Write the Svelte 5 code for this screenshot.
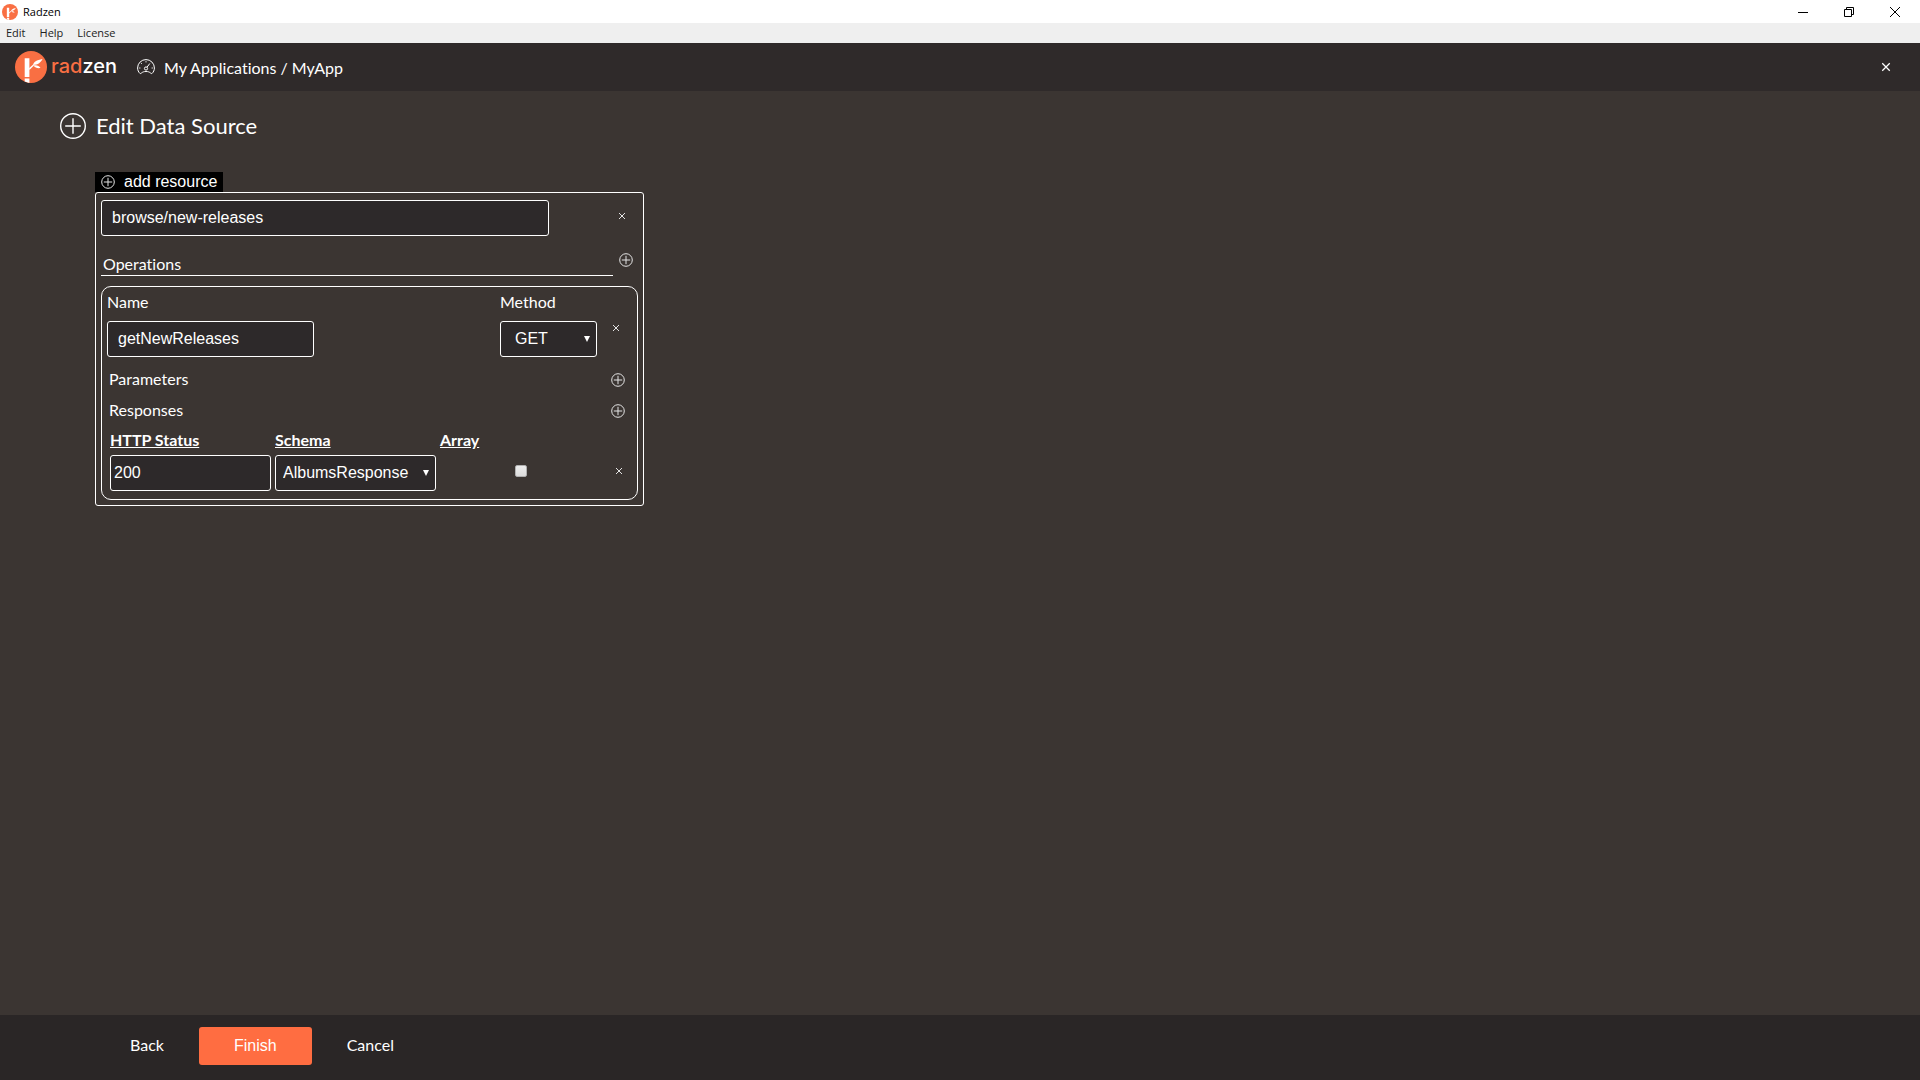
<script>
  const menu = ['Edit', 'Help', 'License'];
  const methods = ['GET', 'POST', 'PUT', 'PATCH', 'DELETE'];
  const schemas = ['AlbumsResponse'];

  let path = $state('browse/new-releases');
  let operation = $state({ name: 'getNewReleases', method: 'GET' });
  let responses = $state([{ status: '200', schema: 'AlbumsResponse', array: false }]);

  function addResponse() {
    responses.push({ status: '', schema: schemas[0], array: false });
  }

  function removeResponse(index) {
    responses.splice(index, 1);
  }
</script>

{#snippet mark(size)}
  <svg width={size} height={size} viewBox="0 0 32 32" aria-hidden="true">
    <circle cx="16" cy="16" r="16" fill="#f96f43" />
    <path d="M9.700 7.300H14.400V26H9.700zM9.700 27.500H14.400V32L9.700 30.500z" fill="#fff" />
    <path d="M14 17.200L18.200 13.600L19 14.400L14.400 19z" fill="#fff" />
    <path d="M18 14C18.500 11 21.500 9 27.500 8C26 11.500 23 13.700 18 14z" fill="#fff" />
    <path d="M18.500 14.600C21.500 13.800 24 14.800 25.500 17C22.500 17.500 20.200 16.800 18.500 14.600z" fill="#fff" />
  </svg>
{/snippet}

{#snippet plus(size, stroke)}
  <svg width={size} height={size} viewBox="0 0 {size} {size}" fill="none" stroke="currentColor" stroke-width={stroke} aria-hidden="true">
    <circle cx={size / 2} cy={size / 2} r={size / 2 - 0.7} />
    <path d="M{size / 2} {size * 0.2}V{size * 0.8}M{size * 0.2} {size / 2}H{size * 0.8}" />
  </svg>
{/snippet}

{#snippet cross(size)}
  <svg width={size} height={size} viewBox="0 0 8 8" fill="none" stroke="currentColor" stroke-width="1" aria-hidden="true">
    <path d="M1 1L7 7M7 1L1 7" />
  </svg>
{/snippet}

{#snippet arrow()}
  <svg class="arrow" width="6" height="6" viewBox="0 0 6 6" aria-hidden="true">
    <path d="M0 0H6L3 6z" fill="currentColor" />
  </svg>
{/snippet}

<div class="app">
  <div class="titlebar">
    {@render mark(16)}
    <span class="title">Radzen</span>
    <div class="controls">
      <button aria-label="Minimize">
        <svg width="10" height="10" viewBox="0 0 10 10"><path d="M0 5.500H10" stroke="#000" /></svg>
      </button>
      <button aria-label="Restore">
        <svg width="10" height="10" viewBox="0 0 10 10" fill="none" stroke="#000">
          <path d="M.5 2.500H7.500V9.500H.5zM2.500 2.500V.5H9.500V7.500H7.500" />
        </svg>
      </button>
      <button aria-label="Close window">
        <svg width="10" height="10" viewBox="0 0 10 10"><path d="M0 0L10 10M10 0L0 10" stroke="#000" /></svg>
      </button>
    </div>
  </div>

  <nav class="menu">
    {#each menu as item}
      <button>{item}</button>
    {/each}
  </nav>

  <header>
    <a href="#home" class="logo">
      {@render mark(32)}
      <span class="brand"><span class="rad">rad</span>zen</span>
    </a>
    <a href="#apps" class="crumbs">
      <svg width="18" height="16" viewBox="0 0 18 16" fill="none" stroke="currentColor" aria-hidden="true">
        <path d="M3 14.500C1.500 13 .6 11.200 .6 9A8.400 8.400 0 0 1 17.400 9C17.400 11.200 16.500 13 15 14.500C13.500 15 13.500 12.500 9 12.500S4.500 15 3 14.500z" />
        <circle cx="9" cy="9.500" r="1.600" />
        <path d="M10 8.200L12.800 4.500" />
        <path d="M9 2V3.500M4 4L5 5M2 9H3.500M14.500 9H16" stroke-width="0.800" />
      </svg>
      <span>My Applications / MyApp</span>
    </a>
    <button class="close" aria-label="Close">{@render cross(10)}</button>
  </header>

  <main>
    <h1>{@render plus(26, 1.4)}Edit Data Source</h1>

    <div class="resources">
      <button class="add">{@render plus(14, 1)}add resource</button>

      <section class="resource">
        <div class="path">
          <input type="text" aria-label="Resource path" bind:value={path} />
          <button aria-label="Remove resource">{@render cross(8)}</button>
        </div>

        <div class="operations">
          <h2>Operations</h2>
          <button aria-label="Add operation">{@render plus(14, 1)}</button>
        </div>

        <div class="operation">
          <div class="signature">
            <label for="name">Name</label>
            <label for="method">Method</label>
            <span></span>
            <input id="name" class="name" type="text" bind:value={operation.name} />
            <div class="select method">
              <select id="method" bind:value={operation.method}>
                {#each methods as method}
                  <option>{method}</option>
                {/each}
              </select>
              {@render arrow()}
            </div>
            <button aria-label="Remove operation">{@render cross(8)}</button>
          </div>

          <div class="row">
            <h3>Parameters</h3>
            <button aria-label="Add parameter">{@render plus(14, 1)}</button>
          </div>
          <div class="row">
            <h3>Responses</h3>
            <button aria-label="Add response" onclick={addResponse}>{@render plus(14, 1)}</button>
          </div>

          <table>
            <thead>
              <tr>
                <th>HTTP Status</th>
                <th>Schema</th>
                <th>Array</th>
                <th class="last"></th>
              </tr>
            </thead>
            <tbody>
              {#each responses as response, i}
                <tr>
                  <td><input class="status" type="text" aria-label="HTTP Status" bind:value={response.status} /></td>
                  <td>
                    <div class="select">
                      <select aria-label="Schema" bind:value={response.schema}>
                        {#each schemas as schema}
                          <option>{schema}</option>
                        {/each}
                      </select>
                      {@render arrow()}
                    </div>
                  </td>
                  <td class="check"><input type="checkbox" aria-label="Array" bind:checked={response.array} /></td>
                  <td class="remove">
                    <button aria-label="Remove response" onclick={() => removeResponse(i)}>{@render cross(8)}</button>
                  </td>
                </tr>
              {/each}
            </tbody>
          </table>
        </div>
      </section>
    </div>
  </main>

  <footer>
    <button>Back</button>
    <button class="primary">Finish</button>
    <button>Cancel</button>
  </footer>
</div>

<style>
  :global(body) {
    margin: 0;
    background: #3b3532;
  }

  .app {
    display: flex;
    flex-direction: column;
    min-height: 100vh;
    color: #fff;
    font: 16px/22px Lato, sans-serif;
    font-variant-ligatures: none;
  }

  .app * {
    box-sizing: border-box;
  }

  svg {
    display: block;
    flex: none;
  }

  button {
    display: flex;
    align-items: center;
    justify-content: center;
    margin: 0;
    padding: 0;
    border: 0;
    background: none;
    color: inherit;
    font: inherit;
    font-variant-ligatures: none;
    cursor: pointer;
  }

  a {
    color: inherit;
    text-decoration: none;
  }

  h1, h2, h3 {
    margin: 0;
    font-size: 16px;
    font-weight: 400;
  }

  .titlebar {
    display: flex;
    align-items: center;
    gap: 5px;
    height: 23px;
    padding: 0 2px;
    background: #fff;
    color: #000;
    font: 11px/16px "Open Sans", sans-serif;
  }

  .controls {
    display: flex;
    margin-left: auto;
  }

  .controls button {
    width: 46px;
    height: 20px;
  }

  .menu {
    display: flex;
    gap: 14px;
    height: 20px;
    padding: 0 6px;
    background: #efefef;
    color: #222;
    font: 11px/20px "Open Sans", sans-serif;
  }

  header {
    display: flex;
    align-items: center;
    height: 48px;
    padding: 0 29px 0 15px;
    background: #2f2a2a;
  }

  .logo {
    display: flex;
    align-items: center;
    gap: 4px;
  }

  .brand {
    padding-bottom: 2px;
    font: 500 20px/30px Inter, sans-serif;
  }

  .rad {
    color: #f96f43;
  }

  .crumbs {
    display: flex;
    align-items: center;
    gap: 9px;
    margin-left: 20px;
  }

  .crumbs span {
    padding-top: 2px;
  }

  .close {
    margin-left: auto;
  }

  main {
    flex: 1;
    padding: 22px 60px;
  }

  h1 {
    display: flex;
    align-items: center;
    gap: 10px;
    font-size: 22px;
    line-height: 26px;
  }

  .resources {
    max-width: 549px;
    margin: 33px 0 0 35px;
  }

  .add {
    gap: 9px;
    height: 20px;
    padding: 0 6px;
    background: #000;
    font: 16px/20px "Liberation Sans", sans-serif;
  }

  .resource {
    padding: 7px 5px 5px;
    border: 1px solid #fff;
    border-radius: 3px;
  }

  .resource button, .add svg {
    color: #e4e4e4;
  }

  input[type='text'], select {
    display: block;
    width: 100%;
    height: 36px;
    margin: 0;
    padding: 0 10px;
    border: 1px solid #fff;
    border-radius: 3px;
    background: #2d292a;
    color: #fff;
    font: 16px/20px "Liberation Sans", sans-serif;
  }

  select {
    appearance: none;
    padding: 0 20px 0 7px;
  }

  .select {
    position: relative;
  }

  .arrow {
    position: absolute;
    top: 15px;
    right: 7px;
    pointer-events: none;
  }

  .path {
    display: flex;
    justify-content: space-between;
  }

  .path input {
    max-width: 448px;
  }

  .path button {
    width: 32px;
    height: 32px;
  }

  .operations {
    display: flex;
    align-items: flex-start;
    margin-top: 17px;
  }

  h2 {
    flex: 1;
    padding-left: 2px;
    border-bottom: 1px solid #fff;
  }

  .operations button {
    width: 25px;
  }

  .operation {
    margin-top: 10px;
    padding: 4px 0 8px 5px;
    border: 1px solid #fff;
    border-radius: 10px;
  }

  .signature {
    display: grid;
    grid-template-columns: minmax(0, 1fr) 97px 40px;
    row-gap: 8px;
    margin-bottom: 11px;
  }

  .name {
    max-width: 207px;
  }

  .method select {
    padding-left: 14px;
  }

  .signature button {
    height: 14px;
    padding-right: 2px;
  }

  .row {
    display: flex;
    justify-content: space-between;
    padding-left: 2px;
  }

  .row + .row {
    margin-top: 9px;
  }

  .row button {
    width: 39px;
    padding-top: 2px;
  }

  table {
    width: 100%;
    margin-top: 8px;
    padding-left: 3px;
    border-spacing: 0;
    table-layout: fixed;
  }

  th, td {
    padding: 0 4px 4px 0;
    text-align: left;
  }

  th {
    font-weight: 700;
    text-decoration: underline;
  }

  td {
    padding-bottom: 0;
  }

  .last {
    width: 32px;
  }

  .status[type='text'] {
    padding: 0 3px;
  }

  .check {
    padding-bottom: 4px;
  }

  .check input {
    appearance: none;
    display: block;
    width: 12px;
    height: 12px;
    margin: 0 auto;
    border: 1px solid #b0b0b0;
    border-radius: 2px;
    background: linear-gradient(#ededed, #dcdcdc);
  }

  .check input:checked {
    background: #ff6d41;
  }

  .remove {
    padding-bottom: 4px;
  }

  .remove button {
    width: 100%;
  }

  footer {
    display: flex;
    height: 65px;
    padding: 12px 95px 15px;
    background: #2a2626;
  }

  footer button {
    padding: 0 35px 2px;
  }

  footer .primary {
    padding-bottom: 0;
    border-radius: 3px;
    background: #ff6d41;
    font-family: "Liberation Sans", sans-serif;
  }
</style>
